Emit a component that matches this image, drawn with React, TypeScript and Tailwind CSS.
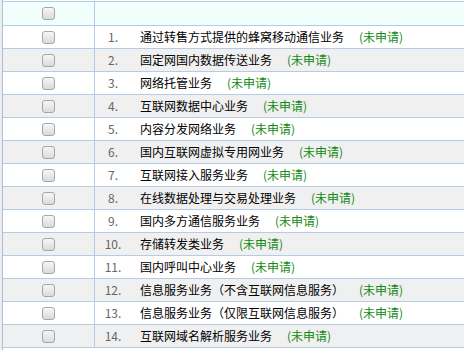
const items = [
  "通过转售方式提供的蜂窝移动通信业务",
  "固定网国内数据传送业务",
  "网络托管业务",
  "互联网数据中心业务",
  "内容分发网络业务",
  "国内互联网虚拟专用网业务",
  "互联网接入服务业务",
  "在线数据处理与交易处理业务",
  "国内多方通信服务业务",
  "存储转发类业务",
  "国内呼叫中心业务",
  "信息服务业务（不含互联网信息服务）",
  "信息服务业务（仅限互联网信息服务）",
  "互联网域名解析服务业务",
];

function Check() {
  return (
    <span className="block w-[13px] h-[13px] rounded-[3px] border border-[#a6a6a6] bg-linear-to-b from-[#f7f7f7] to-[#dadada]" />
  );
}

export default function App() {
  return (
    <div
      className="w-[464px] h-[350px] overflow-hidden bg-white flex text-[12px]"
      style={{ fontFamily: '"Noto Sans CJK SC", "Noto Sans", sans-serif' }}
    >
      <div className="w-[2px] bg-[#ededed]" />
      <div className="flex-1 border-l border-[#a9c0d8] pt-[1px]">
        <div className="flex h-[24px] border-t border-[#b4cce4] bg-[#f0fffc]">
          <div className="w-[92px] border-r border-[#b4cce4] flex items-center justify-center">
            <Check />
          </div>
          <div className="flex-1" />
        </div>
        {items.map((name, i) => (
          <div
            key={name}
            className={`flex h-[23px] border-t border-[#b4cce4] ${i % 2 === 1 ? "bg-[#f0f0f0]" : "bg-white"} ${i === items.length - 1 ? "border-b h-[24px]" : ""}`}
          >
            <div className="w-[92px] border-r border-[#b4cce4] flex items-center justify-center">
              <Check />
            </div>
            <div className="w-[36px] flex items-center justify-center text-[#666]">{i + 1}.</div>
            <div className="flex-1 flex items-center pl-[9px] whitespace-nowrap text-black">
              <span>{name}</span>
              <span className="ml-[15px] text-[#118a11]">(未申请)</span>
            </div>
          </div>
        ))}
      </div>
    </div>
  );
}
